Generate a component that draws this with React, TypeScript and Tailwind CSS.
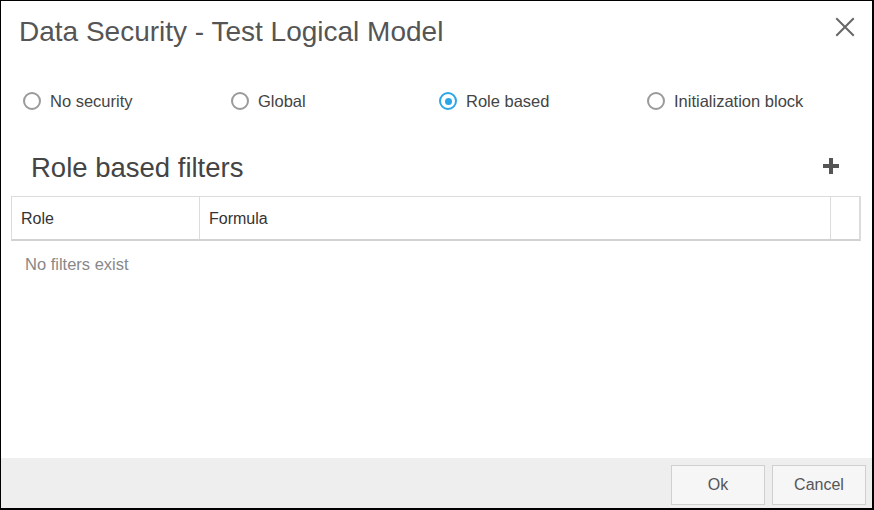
import React from "react";

const font = { fontFamily: '"Liberation Sans", Arial, sans-serif' };

function Radio({ label, checked }: { label: string; checked?: boolean }) {
  return (
    <div className="w-[208px] flex items-center gap-[9px]">
      {checked ? (
        <span className="w-[18px] h-[18px] rounded-full border-[2.5px] border-[#2ba6e6] flex items-center justify-center">
          <span className="w-[7px] h-[7px] rounded-full bg-[#2ba6e6]" />
        </span>
      ) : (
        <span className="w-[18px] h-[18px] rounded-full border-[2.5px] border-[#9a9a9a]" />
      )}
      <span className="text-[16.5px] text-[#444]">{label}</span>
    </div>
  );
}

export default function App() {
  return (
    <div
      style={font}
      className="w-[874px] h-[510px] bg-white border-l border-t border-r-2 border-b-2 border-black flex flex-col"
    >
      <div className="h-[62px] flex items-center justify-between pl-[18px] pr-[18px]">
        <span className="text-[28px] text-[#555]">Data Security - Test Logical Model</span>
        <svg width="20" height="20" viewBox="0 0 20 20" className="mt-[-10px] mr-[-1px]">
          <path d="M2 2 L18 18 M18 2 L2 18" stroke="#666" strokeWidth="2" strokeLinecap="square" />
        </svg>
      </div>
      <div className="h-[76px] flex items-center pl-[22px]">
        <Radio label="No security" />
        <Radio label="Global" />
        <Radio label="Role based" checked />
        <Radio label="Initialization block" />
      </div>
      <div className="h-[57px] flex items-center justify-between pl-[30px] pr-[32px]">
        <span className="text-[27.5px] text-[#444]">Role based filters</span>
        <svg width="18" height="18" viewBox="0 0 18 18" className="mt-[-3px]">
          <path d="M9 1 V17 M1 9 H17" stroke="#555" strokeWidth="4" />
        </svg>
      </div>
      <div className="ml-[10px] w-[850px] flex h-[45px] border border-[#dcdcdc] border-b-2 border-r-2 border-b-[#d2d2d2]">
        <div className="w-[188px] border-r border-[#dcdcdc] flex items-center pl-[9px] pt-[1px] text-[16px] text-[#333]">Role</div>
        <div className="flex-1 border-r border-[#dcdcdc] flex items-center pl-[9px] pt-[1px] text-[16px] text-[#333]">Formula</div>
        <div className="w-[28px]" />
      </div>
      <div className="ml-[10px] pl-[14px] pt-[13px] text-[16.5px] leading-[20px] text-[#888]">No filters exist</div>
      <div className="mt-auto h-[50px] bg-[#eeeeee] flex justify-end items-start pt-[7px] pr-[6px] gap-[7px]">
        <button className="w-[94px] h-[40px] bg-[#f6f6f6] border border-[#d0d0d0] text-[16px] text-[#555]">Ok</button>
        <button className="w-[94px] h-[40px] bg-[#f6f6f6] border border-[#d0d0d0] text-[16px] text-[#555]">Cancel</button>
      </div>
    </div>
  );
}
